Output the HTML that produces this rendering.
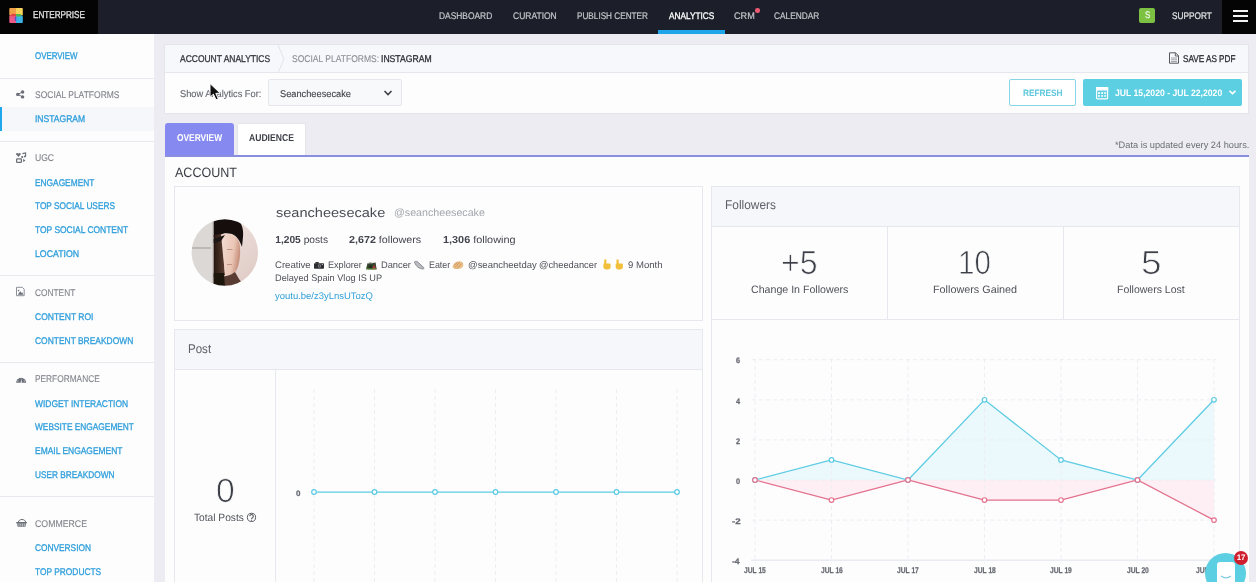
<!DOCTYPE html>
<html><head><meta charset="utf-8"><style>
html,body{margin:0;padding:0;width:1256px;height:582px;overflow:hidden;background:#ebecf1;font-family:"Liberation Sans",sans-serif;text-rendering:geometricPrecision;}
b{font-weight:700}
</style></head><body><div style="position:absolute;left:0;top:0;width:1256px;height:582px;will-change:transform;overflow:hidden">
<div style="position:absolute;left:0px;top:0px;width:1256px;height:34px;background:#1c1f29"></div>
<div style="position:absolute;left:0px;top:0px;width:98px;height:34px;background:#040404"></div>
<div style="position:absolute;left:1222px;top:0px;width:34px;height:34px;background:#040404"></div>
<div style="position:absolute;left:658px;top:30px;width:67px;height:4px;background:#1fa6ea"></div>
<div style="position:absolute;left:755.3px;top:8.3px;width:4.4px;height:4.4px;border-radius:50%;background:#ea5a73"></div>
<div style="position:absolute;left:1139px;top:8px;width:16px;height:15px;background:#7cc142;border-radius:2px"></div>
<div style="position:absolute;left:1233px;top:10px;width:15px;height:2px;background:#f2f2f2"></div>
<div style="position:absolute;left:1233px;top:15px;width:15px;height:2px;background:#f2f2f2"></div>
<div style="position:absolute;left:1233px;top:19.5px;width:15px;height:2px;background:#f2f2f2"></div>
<svg style="position:absolute;left:9px;top:8px" width="14" height="15" viewBox="0 0 14 15">
<path d="M0.3,1 C0.3,0.4 0.7,0 1.3,0 H7 V7.3 H0.3 Z" fill="#f0a049"/>
<path d="M7,0 H12.8 C13.4,0 13.8,0.4 13.8,1 V7.3 H7 Z" fill="#f7d35a"/>
<path d="M0.3,8.5 C0.3,7.6 1,7 2,7 H7 V15 H1.3 C0.7,15 0.3,14.6 0.3,14 Z" fill="#ea5b88"/>
<path d="M7,7.2 H12 C13,7.2 13.8,8 13.8,9 V14 C13.8,14.6 13.4,15 12.8,15 H7 Z" fill="#3ab4e6"/>
<path d="M2,6.3 C3,5.6 6,5.6 7,6.3 V8.2 H2 Z" fill="#e2443f"/>
<path d="M7,6.3 C8,5.8 11,5.8 12,6.3 V8.4 H7 Z" fill="#4fb84e"/>
<path d="M6.2,8.5 C5.4,9.5 5.4,12 6.2,13 H7.3 V8.5 Z" fill="#6a4fc0"/>
</svg>
<div style="position:absolute;left:0px;top:34px;width:154px;height:548px;background:#fdfdfd"></div>
<div style="position:absolute;left:0px;top:78px;width:154px;height:1px;background:#e8eaef"></div>
<div style="position:absolute;left:0px;top:141px;width:154px;height:1px;background:#e8eaef"></div>
<div style="position:absolute;left:0px;top:275px;width:154px;height:1px;background:#e8eaef"></div>
<div style="position:absolute;left:0px;top:362px;width:154px;height:1px;background:#e8eaef"></div>
<div style="position:absolute;left:0px;top:496px;width:154px;height:1px;background:#e8eaef"></div>
<div style="position:absolute;left:0px;top:107px;width:154px;height:24px;background:#f6f7fb"></div>
<div style="position:absolute;left:0px;top:107px;width:2px;height:24px;background:#1ea7ea"></div>
<div style="position:absolute;left:154px;top:34px;width:1102px;height:548px;background:#ececf2"></div>
<div style="position:absolute;left:164px;top:44px;width:1085px;height:70px;background:#fdfdfe;box-sizing:border-box;border:1px solid #e4e5eb"></div>
<div style="position:absolute;left:165px;top:45px;width:1083px;height:27px;background:#f7f8fb;border-bottom:1px solid #e6e7ed"></div>
<svg style="position:absolute;left:277px;top:45px" width="10" height="28" viewBox="0 0 10 28"><polyline points="1,0 7,14 1,28" fill="none" stroke="#e2e4ea" stroke-width="1"/></svg>
<div style="position:absolute;left:268px;top:79px;width:134px;height:27px;background:#f8f9fb;box-sizing:border-box;border:1px solid #e5e7ec;border-radius:2px"></div>
<svg style="position:absolute;left:383px;top:89px" width="10" height="8" viewBox="0 0 10 8"><polyline points="1.5,2 5,5.5 8.5,2" fill="none" stroke="#3f4149" stroke-width="1.6"/></svg>
<div style="position:absolute;left:1009px;top:79px;width:67px;height:27px;background:#ffffff;box-sizing:border-box;border:1px solid #86d6e7;border-radius:2px"></div>
<div style="position:absolute;left:1083px;top:79px;width:159px;height:27px;background:#5ccfe2;border-radius:2px"></div>
<svg style="position:absolute;left:1095px;top:86px" width="14" height="14" viewBox="0 0 14 14">
<rect x="1.6" y="1.6" width="11" height="11.2" rx="0.8" fill="none" stroke="#ffffff" stroke-width="1.2"/>
<rect x="1" y="1" width="12.2" height="3.6" rx="0.6" fill="#ffffff"/>
<g fill="#ffffff"><rect x="3" y="6.2" width="2" height="1.7"/><rect x="6.1" y="6.2" width="2" height="1.7"/><rect x="9.2" y="6.2" width="2" height="1.7"/>
<rect x="3" y="9.2" width="2" height="1.5"/><rect x="6.1" y="9.2" width="2" height="1.5"/><rect x="9.2" y="9.2" width="2" height="1.5"/></g>
</svg>
<svg style="position:absolute;left:1228px;top:89px" width="9" height="7" viewBox="0 0 9 7"><polyline points="1.5,1.8 4.5,4.6 7.5,1.8" fill="none" stroke="#ffffff" stroke-width="1.6"/></svg>
<svg style="position:absolute;left:1168px;top:52px" width="12" height="12" viewBox="0 0 12 12">
<path d="M1.5,0.8 H7.5 L10.5,3.8 V11.2 H1.5 Z" fill="none" stroke="#55575f" stroke-width="1"/>
<path d="M7.3,0.8 V4 H10.5" fill="none" stroke="#55575f" stroke-width="0.9"/>
<g stroke="#8a8c93" stroke-width="0.8"><line x1="3" y1="6" x2="9" y2="6"/><line x1="3" y1="7.8" x2="9" y2="7.8"/><line x1="3" y1="9.6" x2="9" y2="9.6"/></g>
</svg>
<div style="position:absolute;left:165px;top:123px;width:69px;height:34px;background:#868af0;border-radius:3px 3px 0 0"></div>
<div style="position:absolute;left:237px;top:123px;width:69px;height:32px;background:#ffffff;box-sizing:border-box;border:1px solid #e4e5eb;border-bottom:none;border-radius:2px 2px 0 0"></div>
<div style="position:absolute;left:165px;top:155px;width:1084px;height:2px;background:#8a8edf"></div>
<div style="position:absolute;left:165px;top:157px;width:1084px;height:425px;background:#fdfdfd"></div>
<div style="position:absolute;left:174px;top:186px;width:529px;height:135px;background:#fdfdfd;box-sizing:border-box;border:1px solid #e6e8ee"></div>
<svg style="position:absolute;left:191px;top:219px" width="68" height="68" viewBox="0 0 68 68">
<defs><clipPath id="av"><circle cx="33.8" cy="33.5" r="33.2"/></clipPath>
<filter id="bl" x="-10%" y="-10%" width="120%" height="120%"><feGaussianBlur stdDeviation="0.7"/></filter>
<linearGradient id="bgR" x1="0" y1="0" x2="1" y2="1"><stop offset="0" stop-color="#efe5e2"/><stop offset="0.5" stop-color="#e9dad6"/><stop offset="1" stop-color="#dcc6c0"/></linearGradient>
<linearGradient id="face" x1="0" y1="0" x2="1" y2="0.3"><stop offset="0" stop-color="#f4dcd2"/><stop offset="0.7" stop-color="#ebc6b6"/><stop offset="1" stop-color="#c99580"/></linearGradient>
<linearGradient id="shd" x1="0" y1="0" x2="1" y2="0"><stop offset="0" stop-color="#24160f"/><stop offset="1" stop-color="#5e3e33"/></linearGradient></defs>
<g clip-path="url(#av)"><g filter="url(#bl)">
<rect x="-2" y="-2" width="72" height="72" fill="url(#bgR)"/>
<rect x="-2" y="-2" width="24.7" height="72" fill="#dcd8d5"/>
<rect x="21.5" y="-2" width="1" height="72" fill="#b9b4b0"/>
<rect x="1" y="28.5" width="19" height="1" fill="#9c9792"/>
<path d="M22.7,-2 H44 C50,2 53,9 52,18 L51,28 C49,22 46,17 41,15 C36,13.5 32,14 29,16 L22.7,18 Z" fill="#15110f"/>
<path d="M22.7,16 L31,15 L34,56 L22.7,58 Z" fill="url(#shd)"/>
<path d="M30,15.5 C37,13 46,16 48.5,24 C50,33 49,45 45,52 C42,56 38,57 34,56 Z" fill="url(#face)"/>
<path d="M34,16 L22.7,20 V24 L30,22 Z" fill="#1c1512"/>
<path d="M36,30.5 h5.5" stroke="#b89080" stroke-width="0.9"/>
<path d="M36,45.5 h5" stroke="#c08c7c" stroke-width="0.9"/>
<path d="M22.7,56 C28,58 36,59 44,53 L48,60 L56,70 H22.7 Z" fill="#5a3d33"/>
<path d="M22.7,54 H33 L34,70 H22.7 Z" fill="#1a120f"/>
</g></g></svg>
<svg style="position:absolute;left:0;top:0" width="640" height="290" viewBox="0 0 640 290">
<rect x="314" y="263.3" width="10" height="5.4" rx="0.8" fill="#2c2d31"/>
<rect x="315.5" y="262" width="3.2" height="1.6" fill="#2c2d31"/>
<circle cx="319.5" cy="266" r="1.7" fill="#7d7f86"/><circle cx="319.5" cy="266" r="0.8" fill="#2c2d31"/>
<rect x="321.8" y="264" width="1.2" height="0.9" fill="#c9cbd0"/>
<path d="M366,269.2 L367.5,263.2 L370,262.4 L373,263 L375.6,262.6 L376.6,269.2 Z" fill="#33452f"/>
<path d="M367.6,269.2 L370.4,264.4 L373.4,269.2 Z" fill="#1e2a1c"/>
<path d="M371.8,269.2 L374.2,264.6 L376.4,269.2 Z" fill="#a33a36"/>
<rect x="366" y="268.3" width="10.6" height="1" fill="#5f8f3e"/>
<path d="M368,263.6 L370,262.8 L372.4,263.4" stroke="#c9c4bf" stroke-width="0.7" fill="none"/>
<path d="M414.3,262 C415.5,261 417.3,261.2 418.2,262.3 L423.8,267.6 C424.3,268.4 423.6,269.3 422.6,269 L420,268.3 C418.5,267.8 417.2,266.8 416.2,265.6 Z" fill="#b9bbc0" stroke="#75777e" stroke-width="0.7"/>
<path d="M452.8,267.8 C452,265 455.5,261 459.5,261.2 C462.6,261.4 464,264 463,266.4 C461.8,268.8 455.2,270.2 452.8,267.8 Z" fill="#e9c08a"/>
<path d="M455,267.6 L459.6,262.4 M457.4,268.2 L461.6,263.6 M454,265.6 L457.6,262.2" stroke="#c58a4c" stroke-width="0.8"/>
<path d="M604.2,259.6 H606.4 V263.6 H609.4 C610.4,263.6 610.6,264.2 610.6,265 V267 C610.6,268.6 609.4,269.4 607.6,269.4 H606.2 C604.6,269.4 603.4,268.4 603.4,267 V264.4 C603.4,263.8 603.8,263.6 604.2,263.6 Z" fill="#f2bf3a"/>
<path d="M616.5,259.6 H618.7 V263.6 H621.7 C622.7,263.6 622.9,264.2 622.9,265 V267 C622.9,268.6 621.7,269.4 619.9,269.4 H618.5 C616.9,269.4 615.7,268.4 615.7,267 V264.4 C615.7,263.8 616.1,263.6 616.5,263.6 Z" fill="#f2bf3a"/>
</svg>
<div style="position:absolute;left:174px;top:329px;width:529px;height:253px;background:#fdfdfd;box-sizing:border-box;border:1px solid #e6e8ee;border-bottom:none"></div>
<div style="position:absolute;left:175px;top:330px;width:527px;height:39px;background:#f6f7fb;border-bottom:1px solid #e6e8ee"></div>
<div style="position:absolute;left:275px;top:370px;width:1px;height:212px;background:#e6e8ee"></div>
<div style="position:absolute;left:711px;top:186px;width:529px;height:396px;background:#fdfdfd;box-sizing:border-box;border:1px solid #e6e8ee;border-bottom:none"></div>
<div style="position:absolute;left:712px;top:187px;width:527px;height:39px;background:#f6f7fb;border-bottom:1px solid #e6e8ee"></div>
<div style="position:absolute;left:712px;top:319px;width:527px;height:1px;background:#e6e8ee"></div>
<div style="position:absolute;left:887px;top:227px;width:1px;height:92px;background:#e6e8ee"></div>
<div style="position:absolute;left:1063px;top:227px;width:1px;height:92px;background:#e6e8ee"></div>
<div style="position:absolute;left:1249px;top:34px;width:7px;height:548px;background:#ececf2"></div>
<svg style="position:absolute;left:0;top:0" width="1256" height="582"><polygon points="755.0,480.0 755.0,480.0 831.5,459.95 908.0,480.0 984.5,399.8 1061.0,459.95 1137.5,480.0 1214.0,399.8 1214.0,480.0" fill="#ebf9fc"/><polygon points="755.0,480.0 755.0,480.0 831.5,500.05 908.0,480.0 984.5,500.05 1061.0,500.05 1137.5,480.0 1214.0,520.1 1214.0,480.0" fill="#fdeff3"/><line x1="752" y1="359.7" x2="1216" y2="359.7" stroke="#eceef3" stroke-width="1" stroke-dasharray="4,3"/><line x1="752" y1="399.8" x2="1216" y2="399.8" stroke="#eceef3" stroke-width="1" stroke-dasharray="4,3"/><line x1="752" y1="439.9" x2="1216" y2="439.9" stroke="#eceef3" stroke-width="1" stroke-dasharray="4,3"/><line x1="752" y1="480.0" x2="1216" y2="480.0" stroke="#eceef3" stroke-width="1" stroke-dasharray="4,3"/><line x1="752" y1="520.1" x2="1216" y2="520.1" stroke="#eceef3" stroke-width="1" stroke-dasharray="4,3"/><line x1="755.0" y1="359" x2="755.0" y2="563" stroke="#eceef3" stroke-width="1" stroke-dasharray="4,3"/><line x1="831.5" y1="359" x2="831.5" y2="563" stroke="#eceef3" stroke-width="1" stroke-dasharray="4,3"/><line x1="908.0" y1="359" x2="908.0" y2="563" stroke="#eceef3" stroke-width="1" stroke-dasharray="4,3"/><line x1="984.5" y1="359" x2="984.5" y2="563" stroke="#eceef3" stroke-width="1" stroke-dasharray="4,3"/><line x1="1061.0" y1="359" x2="1061.0" y2="563" stroke="#eceef3" stroke-width="1" stroke-dasharray="4,3"/><line x1="1137.5" y1="359" x2="1137.5" y2="563" stroke="#eceef3" stroke-width="1" stroke-dasharray="4,3"/><line x1="1214.0" y1="359" x2="1214.0" y2="563" stroke="#eceef3" stroke-width="1" stroke-dasharray="4,3"/><line x1="751" y1="560.2" x2="1216" y2="560.2" stroke="#dfe2ec" stroke-width="1"/><polyline points="755.0,480.0 831.5,459.95 908.0,480.0 984.5,399.8 1061.0,459.95 1137.5,480.0 1214.0,399.8" fill="none" stroke="#5ccbe3" stroke-width="1.25"/><polyline points="755.0,480.0 831.5,500.05 908.0,480.0 984.5,500.05 1061.0,500.05 1137.5,480.0 1214.0,520.1" fill="none" stroke="#e3708c" stroke-width="1.25"/><circle cx="755.0" cy="480.0" r="2.3" fill="#fff" stroke="#5ccbe3" stroke-width="1.2"/><circle cx="831.5" cy="459.95" r="2.3" fill="#fff" stroke="#5ccbe3" stroke-width="1.2"/><circle cx="908.0" cy="480.0" r="2.3" fill="#fff" stroke="#5ccbe3" stroke-width="1.2"/><circle cx="984.5" cy="399.8" r="2.3" fill="#fff" stroke="#5ccbe3" stroke-width="1.2"/><circle cx="1061.0" cy="459.95" r="2.3" fill="#fff" stroke="#5ccbe3" stroke-width="1.2"/><circle cx="1137.5" cy="480.0" r="2.3" fill="#fff" stroke="#5ccbe3" stroke-width="1.2"/><circle cx="1214.0" cy="399.8" r="2.3" fill="#fff" stroke="#5ccbe3" stroke-width="1.2"/><circle cx="755.0" cy="480.0" r="2.3" fill="#fff" stroke="#e4728f" stroke-width="1.2"/><circle cx="831.5" cy="500.05" r="2.3" fill="#fff" stroke="#e4728f" stroke-width="1.2"/><circle cx="908.0" cy="480.0" r="2.3" fill="#fff" stroke="#e4728f" stroke-width="1.2"/><circle cx="984.5" cy="500.05" r="2.3" fill="#fff" stroke="#e4728f" stroke-width="1.2"/><circle cx="1061.0" cy="500.05" r="2.3" fill="#fff" stroke="#e4728f" stroke-width="1.2"/><circle cx="1137.5" cy="480.0" r="2.3" fill="#fff" stroke="#e4728f" stroke-width="1.2"/><circle cx="1214.0" cy="520.1" r="2.3" fill="#fff" stroke="#e4728f" stroke-width="1.2"/><line x1="314.0" y1="389" x2="314.0" y2="582" stroke="#eceef2" stroke-width="1" stroke-dasharray="4,3"/><line x1="374.5" y1="389" x2="374.5" y2="582" stroke="#eceef2" stroke-width="1" stroke-dasharray="4,3"/><line x1="435.0" y1="389" x2="435.0" y2="582" stroke="#eceef2" stroke-width="1" stroke-dasharray="4,3"/><line x1="495.5" y1="389" x2="495.5" y2="582" stroke="#eceef2" stroke-width="1" stroke-dasharray="4,3"/><line x1="556.0" y1="389" x2="556.0" y2="582" stroke="#eceef2" stroke-width="1" stroke-dasharray="4,3"/><line x1="616.5" y1="389" x2="616.5" y2="582" stroke="#eceef2" stroke-width="1" stroke-dasharray="4,3"/><line x1="677.0" y1="389" x2="677.0" y2="582" stroke="#eceef2" stroke-width="1" stroke-dasharray="4,3"/><line x1="314.0" y1="492" x2="677.0" y2="492" stroke="#5ccbe3" stroke-width="1.25"/><circle cx="314.0" cy="492" r="2.3" fill="#fff" stroke="#5ccbe3" stroke-width="1.2"/><circle cx="374.5" cy="492" r="2.3" fill="#fff" stroke="#5ccbe3" stroke-width="1.2"/><circle cx="435.0" cy="492" r="2.3" fill="#fff" stroke="#5ccbe3" stroke-width="1.2"/><circle cx="495.5" cy="492" r="2.3" fill="#fff" stroke="#5ccbe3" stroke-width="1.2"/><circle cx="556.0" cy="492" r="2.3" fill="#fff" stroke="#5ccbe3" stroke-width="1.2"/><circle cx="616.5" cy="492" r="2.3" fill="#fff" stroke="#5ccbe3" stroke-width="1.2"/><circle cx="677.0" cy="492" r="2.3" fill="#fff" stroke="#5ccbe3" stroke-width="1.2"/><circle cx="251.5" cy="517.4" r="4.1" fill="none" stroke="#5a5c64" stroke-width="1"/><path d="M249.8,516.2 A1.75,1.75 0 1 1 252.5,517.7 C251.8,518.1 251.5,518.4 251.5,519.2" fill="none" stroke="#5a5c64" stroke-width="1.05"/><circle cx="251.5" cy="520.3" r="0.55" fill="#5a5c64"/></svg>
<svg style="position:absolute;left:0;top:0" width="40" height="582" viewBox="0 0 40 582">
<g fill="#6b6e77" stroke="none">
<circle cx="22.6" cy="92" r="1.7"/><circle cx="17.7" cy="94.4" r="1.7"/><circle cx="22.6" cy="96.9" r="1.7"/>
</g>
<g stroke="#6b6e77" stroke-width="1"><line x1="17.7" y1="94.4" x2="22.6" y2="92"/><line x1="17.7" y1="94.4" x2="22.6" y2="96.9"/></g>
<!-- ugc -->
<path d="M18.4,157 L16.2,154.6 C15.6,153.8 16.2,152.9 17.1,152.9 C17.7,152.9 18.2,153.3 18.4,153.7 C18.6,153.3 19.1,152.9 19.7,152.9 C20.6,152.9 21.2,153.8 20.6,154.6 Z" fill="#6b6e77"/>
<path d="M22.4,153.6 L25.6,153 V156.4" fill="none" stroke="#6b6e77" stroke-width="1.1"/>
<circle cx="22.2" cy="157" r="1.1" fill="#6b6e77"/><circle cx="24.9" cy="156.5" r="0.9" fill="#6b6e77"/>
<rect x="16.6" y="158.9" width="4.8" height="3.4" rx="0.6" fill="none" stroke="#6b6e77" stroke-width="1.2"/>
<path d="M23.2,158.8 L25.4,160.6 L23.2,162.2 Z" fill="#6b6e77"/>
<!-- content -->
<path d="M16.5,287.3 H22.3 L24.2,289.2 V295.7 H16.5 Z" fill="none" stroke="#8d9098" stroke-width="1"/>
<path d="M17.8,294.8 L20.2,291.3 L21.6,293 L22.3,292.3 L23.4,294.8 Z" fill="#6b6e77"/>
<circle cx="18.6" cy="290.6" r="0.8" fill="#6b6e77"/>
<!-- performance -->
<path d="M16.2,382.7 A4.95,4.95 0 0 1 26.1,382.7 Z" fill="#6b6e77"/>
<g stroke="#fdfdfd" stroke-width="0.8" fill="none">
<line x1="21.1" y1="377.3" x2="21.1" y2="378.4"/><line x1="18.3" y1="378.3" x2="19" y2="379"/><line x1="23.9" y1="378.3" x2="23.2" y2="379"/>
<line x1="17.4" y1="381" x2="18.4" y2="381"/><line x1="24.8" y1="381" x2="23.8" y2="381"/>
<path d="M21.6,378.6 L20.6,382.7 H21.8 Z" fill="#fdfdfd" stroke="none"/></g>
<!-- basket -->
<path d="M18.4,522.2 C18.6,518.6 25.4,518.6 25.6,522.2" fill="none" stroke="#6b6e77" stroke-width="1"/>
<rect x="16.2" y="522" width="10.7" height="1.3" fill="#6b6e77"/>
<path d="M17,523.3 H26.1 L25.4,526.8 H17.7 Z" fill="#6b6e77"/>
<g stroke="#fdfdfd" stroke-width="0.6"><line x1="19" y1="523.8" x2="19" y2="526.2"/><line x1="20.8" y1="523.8" x2="20.8" y2="526.2"/><line x1="22.6" y1="523.8" x2="22.6" y2="526.2"/><line x1="24.3" y1="523.8" x2="24.3" y2="526.2"/></g>
</svg>
<div style="position:absolute;left:33.00px;top:11px;font-size:10px;font-weight:400;-webkit-text-stroke:0.32px #e2e2e2;line-height:1;white-space:nowrap;color:#e2e2e2;transform:scaleX(0.8125);transform-origin:0 0;">ENTERPRISE</div>
<div style="position:absolute;left:438.80px;top:12px;font-size:9.6px;font-weight:400;-webkit-text-stroke:0.2px #c6c7cb;line-height:1;white-space:nowrap;color:#c6c7cb;transform:scaleX(0.8754);transform-origin:0 0;">DASHBOARD</div>
<div style="position:absolute;left:512.80px;top:12px;font-size:9.6px;font-weight:400;-webkit-text-stroke:0.2px #c6c7cb;line-height:1;white-space:nowrap;color:#c6c7cb;transform:scaleX(0.8857);transform-origin:0 0;">CURATION</div>
<div style="position:absolute;left:576.90px;top:12px;font-size:9.6px;font-weight:400;-webkit-text-stroke:0.2px #c6c7cb;line-height:1;white-space:nowrap;color:#c6c7cb;transform:scaleX(0.8530);transform-origin:0 0;">PUBLISH CENTER</div>
<div style="position:absolute;left:668.80px;top:12px;font-size:9.6px;font-weight:400;-webkit-text-stroke:0.32px #ffffff;line-height:1;white-space:nowrap;color:#ffffff;transform:scaleX(0.8604);transform-origin:0 0;">ANALYTICS</div>
<div style="position:absolute;left:734.10px;top:12px;font-size:9.6px;font-weight:400;-webkit-text-stroke:0.2px #c6c7cb;line-height:1;white-space:nowrap;color:#c6c7cb;transform:scaleX(0.9476);transform-origin:0 0;">CRM</div>
<div style="position:absolute;left:774.40px;top:12px;font-size:9.6px;font-weight:400;-webkit-text-stroke:0.2px #c6c7cb;line-height:1;white-space:nowrap;color:#c6c7cb;transform:scaleX(0.8654);transform-origin:0 0;">CALENDAR</div>
<div style="position:absolute;left:1171.90px;top:12px;font-size:9.6px;font-weight:400;-webkit-text-stroke:0.2px #e6e6e8;line-height:1;white-space:nowrap;color:#e6e6e8;transform:scaleX(0.8609);transform-origin:0 0;">SUPPORT</div>
<div style="position:absolute;left:1144.60px;top:11px;font-size:9.5px;font-weight:400;-webkit-text-stroke:0.2px #f1f8e8;line-height:1;white-space:nowrap;color:#f1f8e8;transform:scaleX(0.8333);transform-origin:0 0;">S</div>
<div style="position:absolute;left:35.00px;top:52px;font-size:9.7px;font-weight:400;-webkit-text-stroke:0.32px #309fdb;line-height:1;white-space:nowrap;color:#309fdb;transform:scaleX(0.8170);transform-origin:0 0;">OVERVIEW</div>
<div style="position:absolute;left:35.20px;top:91px;font-size:9.7px;font-weight:400;-webkit-text-stroke:0.1px #80838b;line-height:1;white-space:nowrap;color:#80838b;transform:scaleX(0.8771);transform-origin:0 0;">SOCIAL PLATFORMS</div>
<div style="position:absolute;left:35.20px;top:115px;font-size:9.7px;font-weight:400;-webkit-text-stroke:0.32px #309fdb;line-height:1;white-space:nowrap;color:#309fdb;transform:scaleX(0.8807);transform-origin:0 0;">INSTAGRAM</div>
<div style="position:absolute;left:35.20px;top:154px;font-size:9.7px;font-weight:400;-webkit-text-stroke:0.1px #80838b;line-height:1;white-space:nowrap;color:#80838b;transform:scaleX(0.8857);transform-origin:0 0;">UGC</div>
<div style="position:absolute;left:35.40px;top:179px;font-size:9.7px;font-weight:400;-webkit-text-stroke:0.32px #309fdb;line-height:1;white-space:nowrap;color:#309fdb;transform:scaleX(0.8609);transform-origin:0 0;">ENGAGEMENT</div>
<div style="position:absolute;left:35.20px;top:202px;font-size:9.7px;font-weight:400;-webkit-text-stroke:0.32px #309fdb;line-height:1;white-space:nowrap;color:#309fdb;transform:scaleX(0.8548);transform-origin:0 0;">TOP SOCIAL USERS</div>
<div style="position:absolute;left:35.20px;top:226px;font-size:9.7px;font-weight:400;-webkit-text-stroke:0.32px #309fdb;line-height:1;white-space:nowrap;color:#309fdb;transform:scaleX(0.8720);transform-origin:0 0;">TOP SOCIAL CONTENT</div>
<div style="position:absolute;left:35.20px;top:250px;font-size:9.7px;font-weight:400;-webkit-text-stroke:0.32px #309fdb;line-height:1;white-space:nowrap;color:#309fdb;transform:scaleX(0.9021);transform-origin:0 0;">LOCATION</div>
<div style="position:absolute;left:35.20px;top:289px;font-size:9.7px;font-weight:400;-webkit-text-stroke:0.1px #80838b;line-height:1;white-space:nowrap;color:#80838b;transform:scaleX(0.8596);transform-origin:0 0;">CONTENT</div>
<div style="position:absolute;left:35.20px;top:313px;font-size:9.7px;font-weight:400;-webkit-text-stroke:0.32px #309fdb;line-height:1;white-space:nowrap;color:#309fdb;transform:scaleX(0.8773);transform-origin:0 0;">CONTENT ROI</div>
<div style="position:absolute;left:35.20px;top:337px;font-size:9.7px;font-weight:400;-webkit-text-stroke:0.32px #309fdb;line-height:1;white-space:nowrap;color:#309fdb;transform:scaleX(0.8714);transform-origin:0 0;">CONTENT BREAKDOWN</div>
<div style="position:absolute;left:35.20px;top:375px;font-size:9.7px;font-weight:400;-webkit-text-stroke:0.1px #80838b;line-height:1;white-space:nowrap;color:#80838b;transform:scaleX(0.8587);transform-origin:0 0;">PERFORMANCE</div>
<div style="position:absolute;left:35.20px;top:400px;font-size:9.7px;font-weight:400;-webkit-text-stroke:0.32px #309fdb;line-height:1;white-space:nowrap;color:#309fdb;transform:scaleX(0.8701);transform-origin:0 0;">WIDGET INTERACTION</div>
<div style="position:absolute;left:35.20px;top:423px;font-size:9.7px;font-weight:400;-webkit-text-stroke:0.32px #309fdb;line-height:1;white-space:nowrap;color:#309fdb;transform:scaleX(0.8591);transform-origin:0 0;">WEBSITE ENGAGEMENT</div>
<div style="position:absolute;left:35.20px;top:447px;font-size:9.7px;font-weight:400;-webkit-text-stroke:0.32px #309fdb;line-height:1;white-space:nowrap;color:#309fdb;transform:scaleX(0.8723);transform-origin:0 0;">EMAIL ENGAGEMENT</div>
<div style="position:absolute;left:35.20px;top:471px;font-size:9.7px;font-weight:400;-webkit-text-stroke:0.32px #309fdb;line-height:1;white-space:nowrap;color:#309fdb;transform:scaleX(0.8527);transform-origin:0 0;">USER BREAKDOWN</div>
<div style="position:absolute;left:35.20px;top:520px;font-size:9.7px;font-weight:400;-webkit-text-stroke:0.1px #80838b;line-height:1;white-space:nowrap;color:#80838b;transform:scaleX(0.9035);transform-origin:0 0;">COMMERCE</div>
<div style="position:absolute;left:35.20px;top:544px;font-size:9.7px;font-weight:400;-webkit-text-stroke:0.32px #309fdb;line-height:1;white-space:nowrap;color:#309fdb;transform:scaleX(0.8585);transform-origin:0 0;">CONVERSION</div>
<div style="position:absolute;left:35.20px;top:568px;font-size:9.7px;font-weight:400;-webkit-text-stroke:0.32px #309fdb;line-height:1;white-space:nowrap;color:#309fdb;transform:scaleX(0.8636);transform-origin:0 0;">TOP PRODUCTS</div>
<div style="position:absolute;left:179.90px;top:55px;font-size:9.8px;font-weight:400;-webkit-text-stroke:0.32px #35373f;line-height:1;white-space:nowrap;color:#35373f;transform:scaleX(0.8654);transform-origin:0 0;">ACCOUNT ANALYTICS</div>
<div style="position:absolute;left:291.60px;top:55px;font-size:9.8px;font-weight:400;-webkit-text-stroke:0.1px #8a8d95;line-height:1;white-space:nowrap;color:#8a8d95;transform:scaleX(0.8700);transform-origin:0 0;">SOCIAL PLATFORMS:</div>
<div style="position:absolute;left:381.40px;top:55px;font-size:9.8px;font-weight:400;-webkit-text-stroke:0.32px #2f3139;line-height:1;white-space:nowrap;color:#2f3139;transform:scaleX(0.8789);transform-origin:0 0;">INSTAGRAM</div>
<div style="position:absolute;left:1183.00px;top:55px;font-size:9.8px;font-weight:400;-webkit-text-stroke:0.32px #2d2f36;line-height:1;white-space:nowrap;color:#2d2f36;transform:scaleX(0.8317);transform-origin:0 0;">SAVE AS PDF</div>
<div style="position:absolute;left:179.90px;top:90px;font-size:9.8px;font-weight:400;-webkit-text-stroke:0.1px #61646c;line-height:1;white-space:nowrap;color:#61646c;transform:scaleX(0.9453);transform-origin:0 0;">Show Analytics For:</div>
<div style="position:absolute;left:279.70px;top:90px;font-size:9.8px;font-weight:400;-webkit-text-stroke:0.1px #3f4149;line-height:1;white-space:nowrap;color:#3f4149;transform:scaleX(0.9440);transform-origin:0 0;">Seancheesecake</div>
<div style="position:absolute;left:1023.00px;top:89px;font-size:9.3px;font-weight:700;line-height:1;white-space:nowrap;color:#5cc7dd;transform:scaleX(0.8909);transform-origin:0 0;">REFRESH</div>
<div style="position:absolute;left:1115.40px;top:89px;font-size:9.3px;font-weight:700;line-height:1;white-space:nowrap;color:#ffffff;transform:scaleX(0.9287);transform-origin:0 0;">JUL 15,2020 - JUL 22,2020</div>
<div style="position:absolute;left:176.70px;top:134px;font-size:10px;font-weight:700;line-height:1;white-space:nowrap;color:#ffffff;transform:scaleX(0.8389);transform-origin:0 0;">OVERVIEW</div>
<div style="position:absolute;left:248.90px;top:134px;font-size:10px;font-weight:700;line-height:1;white-space:nowrap;color:#3d3f47;transform:scaleX(0.8596);transform-origin:0 0;">AUDIENCE</div>
<div style="position:absolute;left:1114.50px;top:141px;font-size:9.3px;font-weight:400;line-height:1;white-space:nowrap;color:#6b6e76;transform:scaleX(0.9919);transform-origin:0 0;">*Data is updated every 24 hours.</div>
<div style="position:absolute;left:175.30px;top:166px;font-size:13.5px;font-weight:400;line-height:1;white-space:nowrap;color:#3b3d46;transform:scaleX(0.9284);transform-origin:0 0;">ACCOUNT</div>
<div style="position:absolute;left:275.60px;top:206px;font-size:13px;font-weight:400;line-height:1;white-space:nowrap;color:#4a4c55;transform:scaleX(1.1196);transform-origin:0 0;">seancheesecake</div>
<div style="position:absolute;left:394.18px;top:208px;font-size:10.5px;font-weight:400;line-height:1;white-space:nowrap;color:#a3a6ae;transform:scaleX(1.0159);transform-origin:0 0;">@seancheesecake</div>
<div style="position:absolute;left:275.30px;top:236px;font-size:10.2px;font-weight:400;line-height:1;white-space:nowrap;color:#43454e;transform:scaleX(1.0000);transform-origin:0 0;"><b>1,205</b> posts</div>
<div style="position:absolute;left:349.30px;top:236px;font-size:10.2px;font-weight:400;line-height:1;white-space:nowrap;color:#43454e;transform:scaleX(1.0536);transform-origin:0 0;"><b>2,672</b> followers</div>
<div style="position:absolute;left:442.50px;top:236px;font-size:10.2px;font-weight:400;line-height:1;white-space:nowrap;color:#43454e;transform:scaleX(1.0662);transform-origin:0 0;"><b>1,306</b> following</div>
<div style="position:absolute;left:275.30px;top:261px;font-size:9.5px;font-weight:400;line-height:1;white-space:nowrap;color:#4f5159;transform:scaleX(1.0086);transform-origin:0 0;">Creative</div>
<div style="position:absolute;left:328.30px;top:261px;font-size:9.5px;font-weight:400;line-height:1;white-space:nowrap;color:#4f5159;transform:scaleX(0.9583);transform-origin:0 0;">Explorer</div>
<div style="position:absolute;left:380.70px;top:261px;font-size:9.5px;font-weight:400;line-height:1;white-space:nowrap;color:#4f5159;transform:scaleX(0.9774);transform-origin:0 0;">Dancer</div>
<div style="position:absolute;left:428.50px;top:261px;font-size:9.5px;font-weight:400;line-height:1;white-space:nowrap;color:#4f5159;transform:scaleX(0.9348);transform-origin:0 0;">Eater</div>
<div style="position:absolute;left:467.50px;top:261px;font-size:9.5px;font-weight:400;line-height:1;white-space:nowrap;color:#4f5159;transform:scaleX(0.9986);transform-origin:0 0;">@seancheetday</div>
<div style="position:absolute;left:539.00px;top:261px;font-size:9.5px;font-weight:400;line-height:1;white-space:nowrap;color:#4f5159;transform:scaleX(0.9783);transform-origin:0 0;">@cheedancer</div>
<div style="position:absolute;left:627.60px;top:261px;font-size:9.5px;font-weight:400;line-height:1;white-space:nowrap;color:#4f5159;transform:scaleX(1.0059);transform-origin:0 0;">9 Month</div>
<div style="position:absolute;left:275.30px;top:274px;font-size:9.5px;font-weight:400;line-height:1;white-space:nowrap;color:#4f5159;transform:scaleX(0.9658);transform-origin:0 0;">Delayed Spain Vlog IS UP</div>
<div style="position:absolute;left:275.30px;top:292px;font-size:9.5px;font-weight:400;line-height:1;white-space:nowrap;color:#2f9fd8;transform:scaleX(0.9969);transform-origin:0 0;">youtu.be/z3yLnsUTozQ</div>
<div style="position:absolute;left:724.95px;top:199px;font-size:12.6px;font-weight:400;line-height:1;white-space:nowrap;color:#5d6068;transform:scaleX(0.9453);transform-origin:0 0;">Followers</div>
<div style="position:absolute;left:781.09px;top:247px;font-size:33.5px;font-weight:400;-webkit-text-stroke:0.8px #fdfdfd;line-height:1;white-space:nowrap;color:#3e4049;transform:scaleX(0.9571);transform-origin:0 0;">+5</div>
<div style="position:absolute;left:750.80px;top:285px;font-size:10.7px;font-weight:400;line-height:1;white-space:nowrap;color:#50525a;transform:scaleX(0.9939);transform-origin:0 0;">Change In Followers</div>
<div style="position:absolute;left:957.55px;top:247px;font-size:33.5px;font-weight:400;-webkit-text-stroke:0.8px #fdfdfd;line-height:1;white-space:nowrap;color:#3e4049;transform:scaleX(0.8818);transform-origin:0 0;">10</div>
<div style="position:absolute;left:932.89px;top:285px;font-size:10.7px;font-weight:400;line-height:1;white-space:nowrap;color:#50525a;transform:scaleX(1.0110);transform-origin:0 0;">Followers Gained</div>
<div style="position:absolute;left:1141.30px;top:247px;font-size:33.5px;font-weight:400;-webkit-text-stroke:0.8px #fdfdfd;line-height:1;white-space:nowrap;color:#3e4049;transform:scaleX(1.1000);transform-origin:0 0;">5</div>
<div style="position:absolute;left:1117.02px;top:285px;font-size:10.7px;font-weight:400;line-height:1;white-space:nowrap;color:#50525a;transform:scaleX(0.9824);transform-origin:0 0;">Followers Lost</div>
<div style="position:absolute;left:187.68px;top:343px;font-size:12.6px;font-weight:400;line-height:1;white-space:nowrap;color:#5d6068;transform:scaleX(0.9167);transform-origin:0 0;">Post</div>
<div style="position:absolute;left:215.79px;top:475px;font-size:33.5px;font-weight:400;-webkit-text-stroke:0.8px #fdfdfd;line-height:1;white-space:nowrap;color:#3e4049;transform:scaleX(1.0062);transform-origin:0 0;">0</div>
<div style="position:absolute;left:194.40px;top:513px;font-size:10.5px;font-weight:400;line-height:1;white-space:nowrap;color:#50525a;transform:scaleX(0.9706);transform-origin:0 0;">Total Posts</div>
<div style="position:absolute;left:296.20px;top:490px;font-size:7.8px;font-weight:700;-webkit-text-stroke:0.25px #686b73;line-height:1;white-space:nowrap;color:#686b73;transform:scaleX(1.0250);transform-origin:0 0;">0</div>
<div style="position:absolute;left:736.00px;top:357px;font-size:8px;font-weight:700;-webkit-text-stroke:0.25px #686b73;line-height:1;white-space:nowrap;color:#686b73;transform:scaleX(0.9200);transform-origin:0 0;">6</div>
<div style="position:absolute;left:736.00px;top:398px;font-size:8px;font-weight:700;-webkit-text-stroke:0.25px #686b73;line-height:1;white-space:nowrap;color:#686b73;transform:scaleX(0.9200);transform-origin:0 0;">4</div>
<div style="position:absolute;left:736.00px;top:438px;font-size:8px;font-weight:700;-webkit-text-stroke:0.25px #686b73;line-height:1;white-space:nowrap;color:#686b73;transform:scaleX(0.9200);transform-origin:0 0;">2</div>
<div style="position:absolute;left:736.00px;top:478px;font-size:8px;font-weight:700;-webkit-text-stroke:0.25px #686b73;line-height:1;white-space:nowrap;color:#686b73;transform:scaleX(0.9200);transform-origin:0 0;">0</div>
<div style="position:absolute;left:732.10px;top:518px;font-size:8px;font-weight:700;-webkit-text-stroke:0.25px #686b73;line-height:1;white-space:nowrap;color:#686b73;transform:scaleX(1.2143);transform-origin:0 0;">-2</div>
<div style="position:absolute;left:732.10px;top:558px;font-size:8px;font-weight:700;-webkit-text-stroke:0.25px #686b73;line-height:1;white-space:nowrap;color:#686b73;transform:scaleX(1.0625);transform-origin:0 0;">-4</div>
<div style="position:absolute;left:744.10px;top:566px;font-size:8.3px;font-weight:700;-webkit-text-stroke:0.25px #686b73;line-height:1;white-space:nowrap;color:#686b73;transform:scaleX(0.8074);transform-origin:0 0;">JUL 15</div>
<div style="position:absolute;left:820.60px;top:566px;font-size:8.3px;font-weight:700;-webkit-text-stroke:0.25px #686b73;line-height:1;white-space:nowrap;color:#686b73;transform:scaleX(0.8074);transform-origin:0 0;">JUL 16</div>
<div style="position:absolute;left:897.10px;top:566px;font-size:8.3px;font-weight:700;-webkit-text-stroke:0.25px #686b73;line-height:1;white-space:nowrap;color:#686b73;transform:scaleX(0.8074);transform-origin:0 0;">JUL 17</div>
<div style="position:absolute;left:973.60px;top:566px;font-size:8.3px;font-weight:700;-webkit-text-stroke:0.25px #686b73;line-height:1;white-space:nowrap;color:#686b73;transform:scaleX(0.8074);transform-origin:0 0;">JUL 18</div>
<div style="position:absolute;left:1050.10px;top:566px;font-size:8.3px;font-weight:700;-webkit-text-stroke:0.25px #686b73;line-height:1;white-space:nowrap;color:#686b73;transform:scaleX(0.8074);transform-origin:0 0;">JUL 19</div>
<div style="position:absolute;left:1126.60px;top:566px;font-size:8.3px;font-weight:700;-webkit-text-stroke:0.25px #686b73;line-height:1;white-space:nowrap;color:#686b73;transform:scaleX(0.8074);transform-origin:0 0;">JUL 20</div>
<div style="position:absolute;left:1196.10px;top:566px;font-size:8.3px;font-weight:700;-webkit-text-stroke:0.25px #686b73;line-height:1;white-space:nowrap;color:#686b73;transform:scaleX(0.8074);transform-origin:0 0;">JUL 21</div>
<div style="position:absolute;left:1205px;top:553px;width:41px;height:41px;border-radius:50%;background:#5ccfe2"></div>
<div style="position:absolute;left:1217px;top:562px;width:18px;height:25px;background:#ffffff;border-radius:3px"></div>
<svg style="position:absolute;left:1217px;top:570px" width="18" height="12" viewBox="0 0 18 12"><path d="M4,6 Q9,9.6 14,6" fill="none" stroke="#7fcde0" stroke-width="1.15"/></svg>
<div style="position:absolute;left:1234px;top:551px;width:14px;height:14px;border-radius:50%;background:#d0202e"></div>
<svg style="position:absolute;left:208px;top:82px" width="14" height="20" viewBox="0 0 14 20">
<path d="M2,1.5 L2,15.2 L5.4,12.2 L8,17.8 L10.3,16.8 L7.8,11.4 L12.2,11.2 Z" fill="#111" stroke="#fff" stroke-width="1" stroke-linejoin="round"/></svg>
<div style="position:absolute;left:1234px;top:553px;width:14px;text-align:center;font-size:8px;font-weight:700;color:#fff;line-height:10px;letter-spacing:-0.3px">17</div>
</div></body></html>
